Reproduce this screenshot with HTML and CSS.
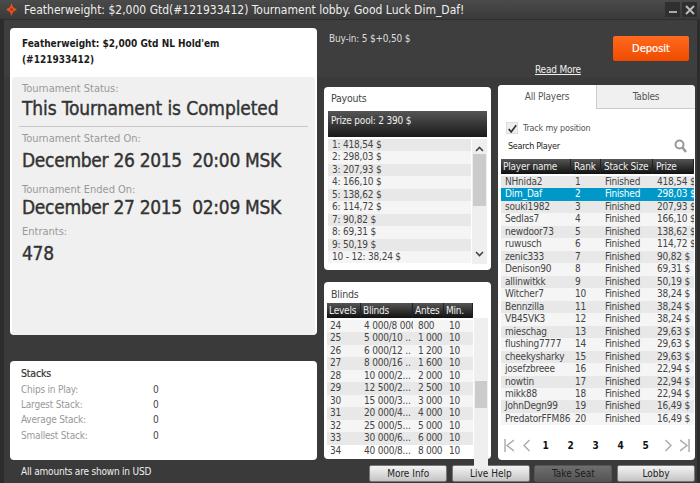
FILE: index.html
```html
<!DOCTYPE html>
<html lang="en">
<head>
<meta charset="utf-8">
<title>Tournament lobby</title>
<link rel="stylesheet" href="styles.css">
</head>
<body>
<div class="window">
  <header class="titlebar">
    <svg class="logo" width="11" height="13" viewBox="0 0 11 13"><path d="M5.5 0 L7 4 L11 6.5 L7 9 L5.5 13 L4 9 L0 6.5 L4 4 Z" fill="#e8501c"/><circle cx="5.5" cy="6.5" r="1.5" fill="#a83a18"/></svg>
    <span class="title">Featherweight: $2,000 Gtd(#121933412) Tournament lobby. Good Luck Dim_Daf!</span>
    <span class="winbtn"><svg width="12" height="12" viewBox="0 0 12 12"><rect x="2" y="7" width="8" height="2" fill="#aaa"/></svg></span>
    <span class="winbtn"><svg width="12" height="12" viewBox="0 0 12 12"><path d="M2 2 L10 10 M10 2 L2 10" stroke="#bbb" stroke-width="2"/></svg></span>
  </header>
  <main class="content">
    <section class="leftcol">
      <div class="card info">
        <h1 class="info-head">Featherweight: $2,000 Gtd NL Hold'em<br>(#121933412)</h1>
        <div class="info-body">
          <div class="label">Tournament Status:</div>
          <div class="big status">This Tournament is Completed</div>
          <hr class="rule">
          <div class="label">Tournament Started On:</div>
          <div class="big date">December 26 2015&nbsp; 20:00 MSK</div>
          <div class="label gap">Tournament Ended On:</div>
          <div class="big date ended">December 27 2015&nbsp; 02:09 MSK</div>
          <div class="label tight">Entrants:</div>
          <div class="big date">478</div>
        </div>
      </div>
      <div class="card stacks">
        <h2 class="stacks-title">Stacks</h2>
        <div class="stack-row"><span class="stack-name">Chips in Play:</span><span>0</span></div>
        <div class="stack-row"><span class="stack-name">Largest Stack:</span><span>0</span></div>
        <div class="stack-row"><span class="stack-name">Average Stack:</span><span>0</span></div>
        <div class="stack-row"><span class="stack-name">Smallest Stack:</span><span>0</span></div>
      </div>
      <div class="note">All amounts are shown in USD</div>
    </section>
    <section class="rightarea">
      <div class="topinfo">
        <span class="buyin">Buy-in: 5 $+0,50 $</span>
        <a class="readmore">Read More</a>
        <button class="deposit">Deposit</button>
      </div>
      <div class="panels">
        <div class="midcol">
          <div class="card payouts">
            <h2 class="card-title">Payouts</h2>
            <div class="prize">Prize pool: 2 390 $</div>
            <div class="scrollwrap">
              <ul class="paylist">
                <li>1: 418,54 $</li><li>2: 298,03 $</li><li>3: 207,93 $</li><li>4: 166,10 $</li><li>5: 138,62 $</li>
                <li>6: 114,72 $</li><li>7: 90,82 $</li><li>8: 69,31 $</li><li>9: 50,19 $</li><li>10 - 12: 38,24 $</li>
              </ul>
              <div class="scrollbar pay-scroll">
                <svg class="arrow" width="9" height="6" viewBox="0 0 9 6"><path d="M1 5 L4.5 1.5 L8 5" fill="none" stroke="#444" stroke-width="1.6"/></svg>
                <div class="thumb pay-thumb"></div>
                <svg class="arrow bottom" width="9" height="6" viewBox="0 0 9 6"><path d="M1 1 L4.5 4.5 L8 1" fill="none" stroke="#444" stroke-width="1.6"/></svg>
              </div>
            </div>
          </div>
          <div class="card blinds">
            <h2 class="card-title">Blinds</h2>
            <div class="blindwrap">
              <div class="blindtable">
                <div class="thead b-row"><span>Levels</span><span>Blinds</span><span>Antes</span><span>Min.</span></div>
                <div class="b-row row"><span>24</span><span>4 000/8 000</span><span>800</span><span>10</span></div>
                <div class="b-row row"><span>25</span><span>5 000/10 ..</span><span>1 000</span><span>10</span></div>
                <div class="b-row row"><span>26</span><span>6 000/12 ..</span><span>1 200</span><span>10</span></div>
                <div class="b-row row"><span>27</span><span>8 000/16 ..</span><span>1 600</span><span>10</span></div>
                <div class="b-row row"><span>28</span><span>10 000/2...</span><span>2 000</span><span>10</span></div>
                <div class="b-row row"><span>29</span><span>12 500/2...</span><span>2 500</span><span>10</span></div>
                <div class="b-row row"><span>30</span><span>15 000/3...</span><span>3 000</span><span>10</span></div>
                <div class="b-row row"><span>31</span><span>20 000/4...</span><span>4 000</span><span>10</span></div>
                <div class="b-row row"><span>32</span><span>25 000/5...</span><span>5 000</span><span>10</span></div>
                <div class="b-row row"><span>33</span><span>30 000/6...</span><span>6 000</span><span>10</span></div>
                <div class="b-row row"><span>34</span><span>40 000/8...</span><span>8 000</span><span>10</span></div>
              </div>
              <div class="scrollbar blind-scroll"><div class="thumb blind-thumb"></div></div>
            </div>
          </div>
        </div>
        <div class="card players">
          <div class="tabs"><span class="tab active">All Players</span><span class="tab">Tables</span></div>
          <label class="track"><span class="checkbox"><svg width="12" height="12" viewBox="0 0 12 12"><path d="M2 6 L5 9.5 L11 1.5" fill="none" stroke="#333" stroke-width="2"/></svg></span>Track my position</label>
          <div class="search"><span>Search Player</span>
            <svg width="13" height="14" viewBox="0 0 13 14"><circle cx="5.5" cy="5.5" r="4" fill="none" stroke="#999" stroke-width="2"/><path d="M8.5 8.5 L12 13" stroke="#999" stroke-width="2.6"/></svg>
          </div>
          <div class="ptable">
            <div class="thead p-row"><span>Player name</span><span>Rank</span><span>Stack Size</span><span>Prize</span></div>
            <div class="p-row row"><span>NHnida2</span><span>1</span><span>Finished</span><span>418,54 $</span></div>
            <div class="p-row row sel"><span>Dim_Daf</span><span>2</span><span>Finished</span><span>298,03 $</span></div>
            <div class="p-row row"><span>souki1982</span><span>3</span><span>Finished</span><span>207,93 $</span></div>
            <div class="p-row row"><span>Sedlas7</span><span>4</span><span>Finished</span><span>166,10 $</span></div>
            <div class="p-row row"><span>newdoor73</span><span>5</span><span>Finished</span><span>138,62 $</span></div>
            <div class="p-row row"><span>ruwusch</span><span>6</span><span>Finished</span><span>114,72 $</span></div>
            <div class="p-row row"><span>zenic333</span><span>7</span><span>Finished</span><span>90,82 $</span></div>
            <div class="p-row row"><span>Denison90</span><span>8</span><span>Finished</span><span>69,31 $</span></div>
            <div class="p-row row"><span>allinwitkk</span><span>9</span><span>Finished</span><span>50,19 $</span></div>
            <div class="p-row row"><span>Witcher7</span><span>10</span><span>Finished</span><span>38,24 $</span></div>
            <div class="p-row row"><span>Bennzilla</span><span>11</span><span>Finished</span><span>38,24 $</span></div>
            <div class="p-row row"><span>VB45VK3</span><span>12</span><span>Finished</span><span>38,24 $</span></div>
            <div class="p-row row"><span>mieschag</span><span>13</span><span>Finished</span><span>29,63 $</span></div>
            <div class="p-row row"><span>flushing7777</span><span>14</span><span>Finished</span><span>29,63 $</span></div>
            <div class="p-row row"><span>cheekysharky</span><span>15</span><span>Finished</span><span>29,63 $</span></div>
            <div class="p-row row"><span>josefzbreee</span><span>16</span><span>Finished</span><span>22,94 $</span></div>
            <div class="p-row row"><span>nowtin</span><span>17</span><span>Finished</span><span>22,94 $</span></div>
            <div class="p-row row"><span>mikk88</span><span>18</span><span>Finished</span><span>22,94 $</span></div>
            <div class="p-row row"><span>JohnDegn99</span><span>19</span><span>Finished</span><span>16,49 $</span></div>
            <div class="p-row row"><span>PredatorFFM86</span><span>20</span><span>Finished</span><span>16,49 $</span></div>
          </div>
          <nav class="pager">
            <svg class="pg-first" width="10" height="13" viewBox="0 0 10 13"><path d="M1 0 V13 M10 1 L3 6.5 L10 12" fill="none" stroke="#aaa" stroke-width="1.4"/></svg>
            <svg class="pg-prev" width="7" height="13" viewBox="0 0 7 13"><path d="M6.5 1 L1 6.5 L6.5 12" fill="none" stroke="#aaa" stroke-width="1.4"/></svg>
            <span class="pg">1</span><span class="pg">2</span><span class="pg">3</span><span class="pg">4</span><span class="pg">5</span>
            <svg class="pg-next" width="7" height="13" viewBox="0 0 7 13"><path d="M0.5 1 L6 6.5 L0.5 12" fill="none" stroke="#aaa" stroke-width="1.4"/></svg>
            <svg class="pg-last" width="10" height="13" viewBox="0 0 10 13"><path d="M0 1 L7 6.5 L0 12 M9 0 V13" fill="none" stroke="#aaa" stroke-width="1.4"/></svg>
          </nav>
        </div>
      </div>
      <div class="actions">
        <button class="act">More Info</button>
        <button class="act">Live Help</button>
        <button class="act off">Take Seat</button>
        <button class="act">Lobby</button>
      </div>
    </section>
  </main>
</div>
</body>
</html>
```
FILE: styles.css
```css
* { box-sizing: border-box; }
html, body { margin: 0; height: 100%; overflow: hidden; }
body {
  width: 700px; height: 483px;
  font-family: "DejaVu Sans Condensed", "DejaVu Sans", sans-serif;
  font-stretch: condensed;
  font-size: 10px;
  letter-spacing: -0.2px;
  color: #444;
  background: #3b3b3b;
}
.window {
  height: 483px;
  display: flex; flex-direction: column;
  background: linear-gradient(#3e3e3e 0, #3e3e3e 77px, #3a3a3a 77px, #3a3a3a 100%);
  border-left: 4px solid #2c2c2c;
  border-right: 3px solid #2c2c2c;
}
.titlebar {
  height: 20px; flex: none;
  display: flex; align-items: center;
  margin-left: -4px; margin-right: -3px;
  padding: 0 3px 0 6px;
  background: linear-gradient(#4a4a4a, #3a3a3a);
  border-bottom: 1px solid #2e2e2e;
  color: #eee;
  font-size: 12px;
  letter-spacing: 0;
}
.logo { flex: none; margin-right: 7px; }
.title { flex: 1; white-space: nowrap; }
.winbtn {
  width: 15px; height: 15px; margin-left: 2px;
  display: flex; align-items: center; justify-content: center;
  background: #2f2f2f;
}
.content { flex: 1; display: flex; align-items: flex-start; }
.card { background: #fff; border-radius: 4px; }
.leftcol { width: 307px; margin: 8px 0 0 6px; flex: none; }
.info { height: 307px; }
.info-head {
  margin: 0; height: 49px;
  padding: 8px 12px 0;
  font-size: 10px; line-height: 16px; font-weight: bold; color: #1c1c1c; letter-spacing: 0;
}
.info-body {
  height: 258px; margin: 0 2px 0; padding: 5px 7px 0 10px;
  background: #f0f0f0; border-radius: 3px;
}
.label { color: #999; font-size: 11px; line-height: 14px; letter-spacing: 0; }
.label.gap { margin-top: 11px; }
.label.tight { margin-top: 6px; }
.big { color: #333; line-height: 24px; -webkit-text-stroke: 0.4px #333; white-space: nowrap; }
.status { font-size: 19px; letter-spacing: -0.1px; }
.date { font-size: 19px; letter-spacing: -0.3px; margin-top: 2px; }
.date.ended { margin-top: -2px; }
.rule { border: 0; border-top: 1px solid #c8c8c8; margin: 6px 0 5px -3px; width: 289px; }
.stacks { height: 99px; margin-top: 26px; padding: 5px 11px; }
.stacks-title { margin: 0 0 2px; font-weight: normal; font-size: 10.5px; line-height: 14px; color: #333; -webkit-text-stroke: 0.2px #333; }
.stack-row { display: flex; height: 15.2px; line-height: 15px; color: #444; }
.stack-name { width: 132px; color: #999; }
.note { color: #eee; margin: 5px 0 0 11px; line-height: 14px; }
.rightarea { flex: 1; margin-left: 7px; height: 463px; display: flex; flex-direction: column; }
.topinfo { position: relative; height: 65px; flex: none; }
.buyin { position: absolute; left: 5px; top: 12px; color: #ddd; line-height: 14px; }
.readmore { position: absolute; left: 211px; top: 43px; color: #eee; text-decoration: underline; line-height: 14px; }
.deposit {
  position: absolute; left: 289px; top: 16px;
  width: 76px; height: 25px; border: 0; border-radius: 2px;
  background: linear-gradient(#ff6a1e, #ef4b00);
  color: #fff; font: inherit; font-size: 11px; -webkit-text-stroke: 0.2px #fff;
}
.panels { display: flex; gap: 7px; height: 375px; flex: none; }
.midcol { width: 167px; display: flex; flex-direction: column; gap: 12px; padding-top: 2px; }
.card-title { margin: 0; font-weight: normal; font-size: 10.5px; line-height: 14px; color: #444; }
.payouts { height: 183px; padding: 4px 4px 0; }
.payouts .card-title { padding-left: 3px; height: 20px; }
.prize {
  height: 26px; padding: 3px 3px;
  background: linear-gradient(#555, #1a1a1a);
  color: #eee; line-height: 13px;
}
.scrollwrap { display: flex; margin-top: 2px; height: 125px; }
.paylist { list-style: none; margin: 0; padding: 0; width: 144px; }
.paylist li { height: 12.45px; line-height: 12.45px; padding-left: 4px; background: #f5f5f5; white-space: nowrap; }
.paylist li:nth-child(odd) { background: #e8e8e8; }
.scrollbar { position: relative; background: #efefef; }
.pay-scroll { width: 15px; margin-left: 1px; }
.arrow { position: absolute; left: 3px; top: 7px; }
.arrow.bottom { top: 112px; }
.thumb { position: absolute; left: 1px; right: 1px; background: #cbcbcb; }
.pay-thumb { top: 15px; height: 52px; }
.blinds { height: 177px; padding: 5px 3px 0; }
.blinds .card-title { padding-left: 4px; height: 16px; }
.blindwrap { display: flex; }
.blindtable { width: 146px; }
.b-row { display: grid; grid-template-columns: 34px 52px 31px 29px; }
.b-row span { overflow: hidden; white-space: nowrap; padding-left: 2px; }
.row { height: 12.47px; line-height: 12.47px; background: #f5f5f5; }
.blindtable .row span:nth-child(1) { padding-left: 3px; }
.blindtable .row span:nth-child(2) { padding-left: 3px; padding-right: 2px; }
.blindtable .row span:nth-child(3) { padding-left: 5px; letter-spacing: -0.3px; }
.blindtable .row span:nth-child(4) { padding-left: 5px; }
.blindtable .row:nth-child(odd) { background: #e8e8e8; }
.blindtable .row:last-child { background: #fff; }
.thead {
  height: 15px; line-height: 15px;
  background: linear-gradient(#555, #111);
  color: #eee;
  margin-bottom: 2px;
}
.thead span { border-right: 1px solid #222; }
.blind-scroll { width: 14px; margin: 15px 0 0 1px; height: 150px; }
.blind-thumb { top: 63px; height: 27px; }
.players { width: 197px; height: 375px; overflow: hidden; }
.tabs { display: flex; height: 24px; }
.tab { flex: 1; text-align: center; line-height: 24px; background: #f0f0f0; border-bottom: 1px solid #ccc; border-left: 1px solid #ccc; color: #555; }
.tab.active { background: #fff; border: 0; }
.track { display: flex; align-items: center; margin: 12px 0 0 8px; height: 13px; font-size: 9px; color: #555; }
.checkbox { width: 12px; height: 12px; margin-right: 5px; background: #eee; border: 1px solid #ddd; display: flex; }
.search { display: flex; justify-content: space-between; align-items: center; margin: 3px 8px 0 10px; height: 18px; font-size: 9px; letter-spacing: -0.3px; color: #222; }
.ptable { margin: 4px 1px 0 3px; }
.p-row { display: grid; grid-template-columns: 70px 30px 52px 41px; }
.p-row span { white-space: nowrap; overflow: hidden; padding-left: 3px; }
.p-row span:first-child { padding-left: 2px; }
.p-row.row span { padding-left: 4px; }
.ptable .row:nth-child(even) { background: #e8e8e8; }
.ptable .row.sel { background: #0098c8; color: #fff; }
.pager { display: flex; align-items: center; margin: 13px 0 0 6px; height: 14px; }
.pg { font-weight: bold; color: #111; width: 25px; text-align: center; font-size: 10px; }
.pg-prev { margin: 0 3px 0 9px; }
.pg-next { margin-left: 7px; }
.pg-last { margin-left: 8px; }
.actions { display: flex; justify-content: flex-end; gap: 4.6px; padding-right: 2px; margin-top: 5px; }
.act {
  width: 78px; height: 17px; padding: 0;
  border: 1px solid #777; border-radius: 2px;
  background: linear-gradient(#f4f4f4, #c4c4c4);
  font: inherit; color: #222; line-height: 14px;
}
.act.off { background: linear-gradient(#6e6e6e, #555); border-color: #555; color: #1e1e1e; }
```
